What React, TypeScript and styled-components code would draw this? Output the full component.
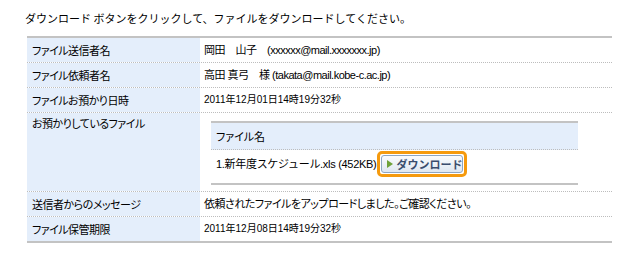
import styled, { createGlobalStyle } from 'styled-components';

const GlobalStyle = createGlobalStyle`
  body {
    margin: 0;
    background: #fff;
    color: #000;
    font-family: "Noto Sans CJK JP", "Noto Sans", sans-serif;
  }
`;

const Page = styled.div`
  padding: 12px 0 0 25px;
`;

const Lead = styled.p`
  margin: 0;
  font-size: 11px;
  line-height: 12px;
`;

const Sheet = styled.div`
  margin: 12px 0 0 2px;
  width: 585px;
  border-top: 2px solid #c3c3c3;
  border-bottom: 2px solid #c3c3c3;
`;

const Row = styled.div`
  display: grid;
  grid-template-columns: 173px 1fr;
  border-bottom: 1px dotted #bdbdbd;
  &:last-child {
    border-bottom: none;
  }
`;

const Label = styled.div<{ $top?: boolean }>`
  background: #e4eefb;
  padding: ${p => (p.$top ? '4px 5px 6px' : '6px 5px')};
  font-size: 11px;
  line-height: 12px;
  font-feature-settings: 'palt';
  letter-spacing: -0.5px;
`;

const Value = styled.div<{ $small?: boolean }>`
  padding: 6px 4px;
  font-family: "Liberation Sans", "Noto Sans CJK JP", sans-serif;
  font-size: ${p => (p.$small ? '10px' : '11px')};
  line-height: 12px;
  font-feature-settings: 'palt';
  letter-spacing: ${p => (p.$small ? '0' : '-0.5px')};
  white-space: nowrap;
`;

const FileCell = styled.div`
  padding: 8px 34px 6px 11px;
`;

const FileTable = styled.div`
  border-top: 2px solid #c3c3c3;
  border-bottom: 2px solid #c3c3c3;
`;

const FileHead = styled.div`
  background: #e4eefb;
  padding: 7px 5px;
  font-size: 11px;
  line-height: 12px;
  font-feature-settings: 'palt';
  border-bottom: 1px dotted #bdbdbd;
`;

const FileLine = styled.div`
  display: flex;
  align-items: center;
  gap: 1px;
  padding: 1px 5px 6px;
  font-family: "Liberation Sans", "Noto Sans CJK JP", sans-serif;
  font-size: 11px;
  line-height: 12px;
  letter-spacing: -0.3px;
`;

const Highlight = styled.span`
  display: inline-flex;
  padding: 1px;
  border: 3px solid #f59a0e;
  border-radius: 5px;
`;

const DownloadButton = styled.button`
  display: inline-flex;
  align-items: center;
  gap: 3px;
  width: 82px;
  height: 18px;
  padding: 0 0 0 5px;
  border: 1px solid #8ea6c2;
  border-radius: 3px;
  background: linear-gradient(#fbfcfe, #dfe7f1);
  color: #3a4d6e;
  font-family: "Noto Sans CJK JP", "Noto Sans", sans-serif;
  font-size: 11px;
  font-weight: 700;
  line-height: 12px;
  letter-spacing: 0;
  cursor: pointer;
`;

const Arrow = styled.span`
  width: 0;
  height: 0;
  border-top: 4px solid transparent;
  border-bottom: 4px solid transparent;
  border-left: 6px solid #6fa23a;
`;

export default function App() {
  return (
    <>
      <GlobalStyle />
      <Page>
        <Lead>ダウンロード ボタンをクリックして、ファイルをダウンロードしてください。</Lead>
        <Sheet>
          <Row>
            <Label>ファイル送信者名</Label>
            <Value>岡田　山子　(xxxxxx@mail.xxxxxxx.jp)</Value>
          </Row>
          <Row>
            <Label>ファイル依頼者名</Label>
            <Value>高田 真弓　様 (takata@mail.kobe-c.ac.jp)</Value>
          </Row>
          <Row>
            <Label>ファイルお預かり日時</Label>
            <Value $small>2011年12月01日14時19分32秒</Value>
          </Row>
          <Row>
            <Label $top>お預かりしているファイル</Label>
            <FileCell>
              <FileTable>
                <FileHead>ファイル名</FileHead>
                <FileLine>
                  <span>1.新年度スケジュール.xls (452KB)</span>
                  <Highlight>
                    <DownloadButton type="button">
                      <Arrow />
                      ダウンロード
                    </DownloadButton>
                  </Highlight>
                </FileLine>
              </FileTable>
            </FileCell>
          </Row>
          <Row>
            <Label>送信者からのメッセージ</Label>
            <Value>依頼されたファイルをアップロードしました。ご確認ください。</Value>
          </Row>
          <Row>
            <Label>ファイル保管期限</Label>
            <Value $small>2011年12月08日14時19分32秒</Value>
          </Row>
        </Sheet>
      </Page>
    </>
  );
}
